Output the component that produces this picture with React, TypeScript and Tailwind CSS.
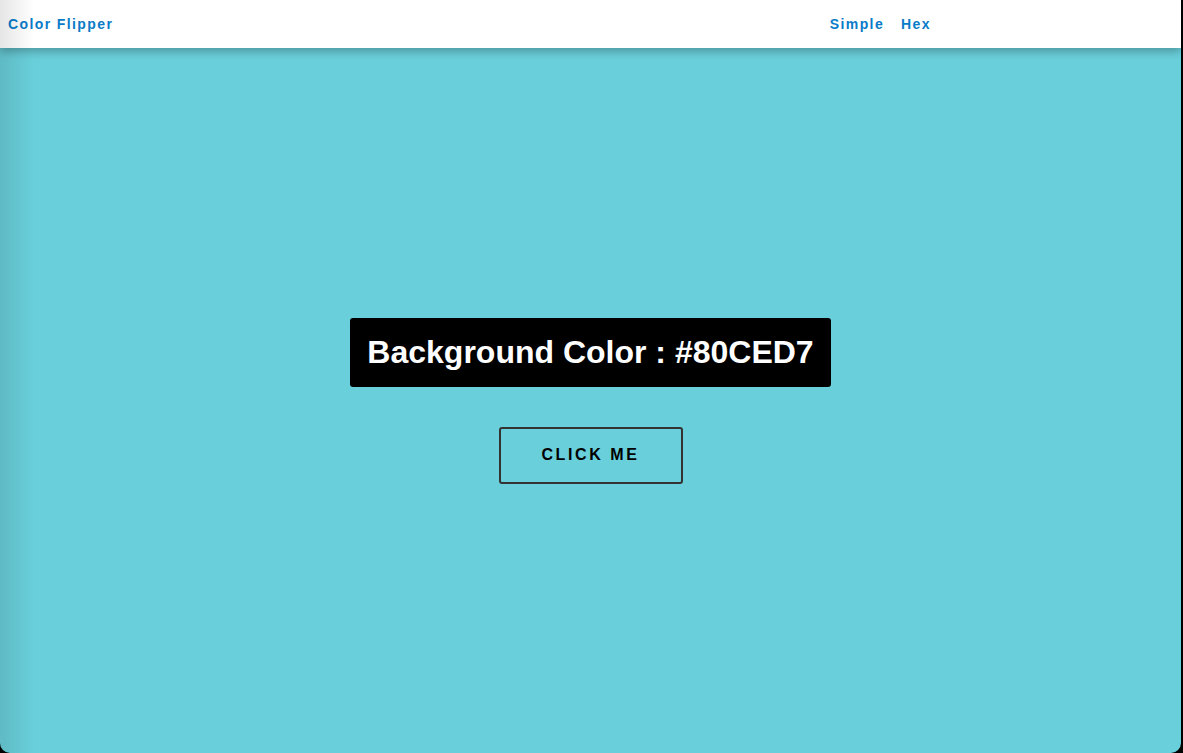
export default function App() {
  return (
    <div className="h-[753px] w-[1183px] overflow-hidden bg-black font-['Liberation_Sans',Arial,sans-serif]">
      <div className="relative flex h-full w-[1181px] flex-col overflow-hidden rounded-b-[10px] bg-[#69cfda]">
        {/* Nav */}
        <nav className="relative z-10 flex h-12 shrink-0 items-center justify-between bg-white pl-2 pr-[250px] shadow-[0_4px_8px_rgba(0,0,0,0.25)]">
          <span className="text-[14px] font-bold tracking-[1.4px] text-[#0a7bc8]">Color Flipper</span>
          <div className="flex gap-[17px] text-[14px] font-bold tracking-[1.4px] text-[#0a7bc8]">
            <a>Simple</a>
            <a>Hex</a>
          </div>
        </nav>

        {/* Main */}
        <main className="flex flex-1 flex-col items-center justify-center">
          <h2 className="rounded-[3px] bg-black px-[17px] py-[15px] text-[32px] leading-[39px] font-bold text-white">
            Background Color : #80CED7
          </h2>
          <button className="mt-[40px] h-[57px] w-[184px] rounded-[3px] border-2 border-[#333] text-[16px] font-bold tracking-[2.6px] text-black">
            CLICK ME
          </button>
        </main>

        {/* window edge shading */}
        <div className="pointer-events-none absolute inset-y-0 left-0 z-20 w-[34px] bg-gradient-to-r from-black/10 to-transparent" />
      </div>
    </div>
  );
}
